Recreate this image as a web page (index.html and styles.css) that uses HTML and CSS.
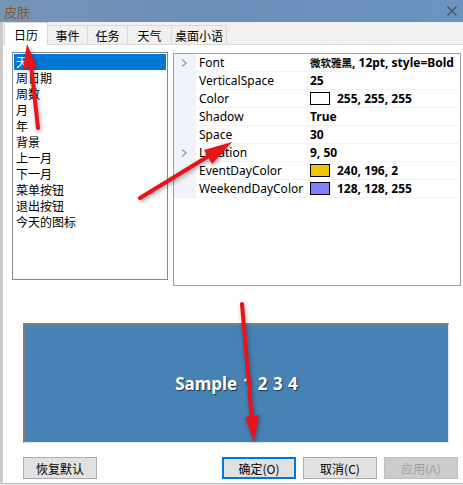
FILE: index.html
```html
<!DOCTYPE html>
<html lang="zh-CN">
<head>
    <meta charset="UTF-8">
    <title>皮肤</title>
    <link rel="stylesheet" href="styles.css">
</head>
<body>
<div class="titlebar">
    <span class="title">皮肤</span>
    <svg class="close" width="10" height="10" viewBox="0 0 10 10"><path d="M0.5 0.5 L9.5 9.5 M9.5 0.5 L0.5 9.5"/></svg>
</div>
<div class="window">
    <div class="behind"></div>
    <div class="dialog">
        <div class="tabs">
            <div class="tab active w44">日历</div>
            <div class="tab w40">事件</div>
            <div class="tab w40">任务</div>
            <div class="tab w44">天气</div>
            <div class="tab w55">桌面小语</div>
        </div>

        <div class="page">
            <ul class="listbox">
                <li class="sel">天</li>
                <li>周日期</li>
                <li>周数</li>
                <li>月</li>
                <li>年</li>
                <li>背景</li>
                <li>上一月</li>
                <li>下一月</li>
                <li>菜单按钮</li>
                <li>退出按钮</li>
                <li>今天的图标</li>
            </ul>

            <div class="grid">
                <div class="row">
                    <div class="gutter"><svg width="6" height="8" viewBox="0 0 6 8"><path d="M1 0.5 L5 4 L1 7.5"/></svg></div>
                    <div class="name">Font</div>
                    <div class="value"><span class="cjk">微软雅黑</span>, 12pt, style=Bold</div>
                </div>
                <div class="row">
                    <div class="gutter"></div>
                    <div class="name">VerticalSpace</div>
                    <div class="value">25</div>
                </div>
                <div class="row">
                    <div class="gutter"></div>
                    <div class="name">Color</div>
                    <div class="value"><span class="swatch" style="background:#ffffff"></span>255, 255, 255</div>
                </div>
                <div class="row">
                    <div class="gutter"></div>
                    <div class="name">Shadow</div>
                    <div class="value">True</div>
                </div>
                <div class="row">
                    <div class="gutter"></div>
                    <div class="name">Space</div>
                    <div class="value">30</div>
                </div>
                <div class="row">
                    <div class="gutter"><svg width="6" height="8" viewBox="0 0 6 8"><path d="M1 0.5 L5 4 L1 7.5"/></svg></div>
                    <div class="name">Location</div>
                    <div class="value">9, 50</div>
                </div>
                <div class="row">
                    <div class="gutter"></div>
                    <div class="name">EventDayColor</div>
                    <div class="value"><span class="swatch" style="background:#f0c402"></span>240, 196, 2</div>
                </div>
                <div class="row">
                    <div class="gutter"></div>
                    <div class="name">WeekendDayColor</div>
                    <div class="value"><span class="swatch" style="background:#8080ff"></span>128, 128, 255</div>
                </div>
            </div>
        </div>

        <div class="preview">
            <span class="sample">Sample 1 2 3 4</span>
        </div>

        <div class="buttons">
            <button class="btn">恢复默认</button>
            <button class="btn ok">确定(O)</button>
            <button class="btn">取消(C)</button>
            <button class="btn" disabled>应用(A)</button>
        </div>
    </div>
</div>

<!-- красные стрелки поверх скриншота -->
<svg class="arrows" width="463" height="485" viewBox="0 0 463 485">
    <g class="arrow">
        <line x1="38" y1="128" x2="31" y2="64"/>
        <polygon points="27,44 37,67 23,69"/>
    </g>
    <g class="arrow">
        <line x1="140" y1="198" x2="212" y2="154"/>
        <polygon points="232,142 212,164 204,150"/>
    </g>
    <g class="arrow">
        <line x1="242" y1="304" x2="252" y2="420"/>
        <polygon points="254,442 245,417 259,415"/>
    </g>
</svg>
</body>
</html>
```

FILE: styles.css
```css
body {
    margin: 0;
    width: 463px;
    height: 485px;
    overflow: hidden;
    position: relative;
    background: #e4e4e4;
    font-family: "Noto Sans", "Noto Sans CJK SC", sans-serif;
    font-size: 12px;
    color: #000;
}
.titlebar {
    height: 22px;
    display: flex;
    align-items: center;
    justify-content: space-between;
    padding: 0 6px 0 4px;
    background: linear-gradient(90deg, #7894b6, #6a8eb8 45%, #6c94c0);
}
.title {
    font-family: "Noto Sans CJK SC", sans-serif;
    font-size: 13px;
    color: #80593f;
}
.close path {
    stroke: #3f4f63;
    stroke-width: 1.1;
    fill: none;
}
.window {
    display: flex;
    height: 462px;
}
.behind {
    width: 3px;
    background: #cbcbcb;
}
.dialog {
    flex: 1;
    display: flex;
    flex-direction: column;
    background: #fff;
    border-bottom: 1px solid #bdbdbd;
}

/* вкладки */
.tabs {
    display: flex;
    align-items: flex-end;
    height: 22px;
    padding-left: 1px;
    background: #f0f0f0;
    border-bottom: 1px solid #d9d9d9;
}
.tab {
    height: 19px;
    box-sizing: border-box;
    display: flex;
    align-items: center;
    justify-content: center;
    border-top: 1px solid #d9d9d9;
    border-right: 1px solid #d9d9d9;
    font-family: "Noto Sans CJK SC", sans-serif;
    font-size: 12px;
}
.tab.active {
    height: 23px;
    margin-bottom: -1px;
    background: #fff;
    border-left: 1px solid #d9d9d9;
}
.w40 { width: 40px; }
.w44 { width: 44px; }
.w55 { width: 55px; }

.page {
    display: flex;
    align-items: flex-start;
    gap: 5px;
    height: 278px;
    box-sizing: border-box;
    padding: 7px 0 0 9px;
}
.listbox {
    width: 156px;
    height: 228px;
    box-sizing: border-box;
    margin: 0;
    padding: 1px;
    list-style: none;
    border: 1px solid #828790;
}
.listbox li {
    height: 16px;
    line-height: 16px;
    padding-left: 2px;
    font-family: "Noto Sans CJK SC", sans-serif;
    font-size: 12px;
}
.listbox li.sel {
    background: #0078d7;
    color: #fff;
}

/* таблица свойств */
.grid {
    width: 288px;
    height: 233px;
    box-sizing: border-box;
    margin-top: 1px;
    border: 1px solid #a0a0a0;
}
.row {
    display: grid;
    grid-template-columns: 22px 112px 1fr;
    height: 18px;
    box-sizing: border-box;
    border-bottom: 1px solid #f0f3f9;
    white-space: nowrap;
}
.gutter {
    background: #f0f3f9;
    display: flex;
    align-items: center;
    padding-left: 7px;
}
.gutter path {
    stroke: #9a9a9a;
    stroke-width: 1.3;
    fill: none;
}
.name {
    padding-left: 3px;
    line-height: 17px;
    border-right: 1px solid #f0f3f9;
}
.value {
    display: flex;
    align-items: center;
    padding-left: 2px;
    font-weight: bold;
    overflow: hidden;
}
.value .cjk {
    font-family: "Noto Sans CJK SC", sans-serif;
    font-size: 10.5px;
    font-weight: normal;
    -webkit-text-stroke: 0.3px #000;
}
.swatch {
    width: 20px;
    height: 13px;
    box-sizing: border-box;
    border: 1px solid #000;
    margin-right: 7px;
    flex: none;
}

.preview {
    width: 426px;
    height: 120px;
    box-sizing: border-box;
    margin-left: 20px;
    border-top: 2px solid #808080;
    border-left: 2px solid #808080;
    border-right: 1px solid #e6e6e6;
    border-bottom: 1px solid #e6e6e6;
    background: #4682b4;
    display: flex;
    align-items: center;
    justify-content: center;
}
.sample {
    color: #fff;
    font-weight: bold;
    font-size: 17px;
    word-spacing: 1px;
    text-shadow: 1px 1px 1px rgba(0, 0, 0, 0.6);
}

.buttons {
    display: flex;
    gap: 7px;
    margin-top: 14px;
    padding: 0 5px 0 20px;
}
.btn {
    width: 74px;
    height: 22px;
    box-sizing: border-box;
    padding: 0;
    border: 1px solid #adadad;
    background: #e1e1e1;
    font-family: "Noto Sans CJK SC", sans-serif;
    font-size: 12px;
    color: #000;
}
.btn.ok {
    margin-left: auto;
    border: 2px solid #0078d7;
}
.btn:disabled {
    background: #cccccc;
    border-color: #bfbfbf;
    color: #a0a0a0;
}

.arrows {
    position: absolute;
    top: 0;
    left: 0;
    pointer-events: none;
}
.arrow {
    filter: drop-shadow(1px 2px 2px rgba(0, 0, 0, 0.35));
}
.arrow line {
    stroke: #e8141a;
    stroke-width: 4;
    stroke-linecap: round;
}
.arrow polygon {
    fill: #e8141a;
}
```
